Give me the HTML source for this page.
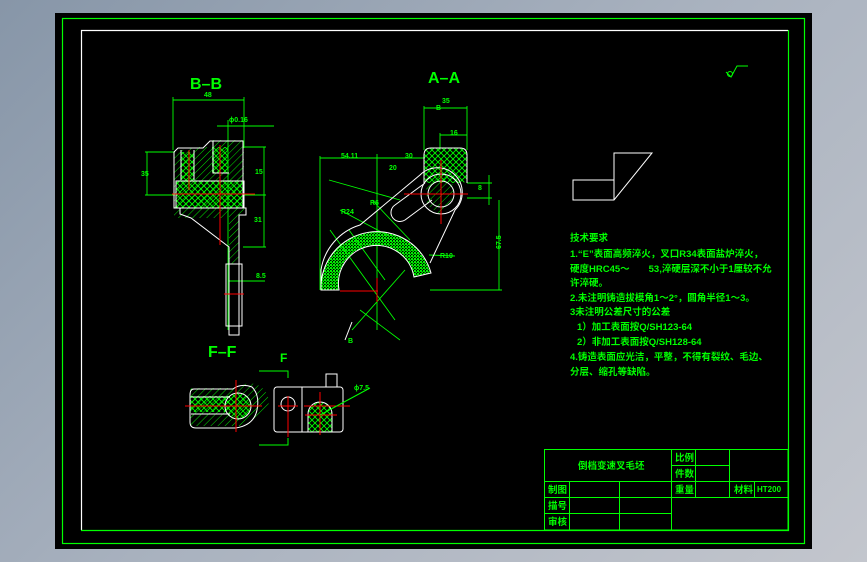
<!DOCTYPE html>
<html><head><meta charset="utf-8"><style>
html,body{margin:0;padding:0}
body{width:867px;height:562px;overflow:hidden;background:linear-gradient(135deg,#8796a8 0%,#a9b2bf 50%,#c3c6cd 100%);position:relative;font-family:"Liberation Sans","Noto Sans CJK SC",sans-serif}
svg{position:absolute;left:0;top:0}
</style></head><body>
<svg width="867" height="562" viewBox="0 0 867 562" xmlns="http://www.w3.org/2000/svg">
<defs>
<pattern id="xh" width="6" height="6" patternUnits="userSpaceOnUse">
<path d="M0 0L6 6M6 0L0 6" stroke="#00ff00" stroke-width="0.9"/>
</pattern>
<pattern id="dh" width="5" height="5" patternUnits="userSpaceOnUse" patternTransform="rotate(45)">
<path d="M0 0V5" stroke="#00ff00" stroke-width="0.9"/>
</pattern>
<pattern id="ch" width="3" height="3" patternUnits="userSpaceOnUse">
<rect width="2" height="2" fill="#00ee00"/><rect x="1.5" y="1.5" width="1.5" height="1.5" fill="#00ee00"/>
</pattern>
</defs>
<rect x="55" y="13" width="757" height="536" fill="#000"/>
<rect x="62.5" y="18.5" width="742" height="525" fill="none" stroke="#00ff00" stroke-width="1.2"/>
<path d="M81.5 530V30.5H788" fill="none" stroke="#fff" stroke-width="1.2"/>
<path d="M788.5 30V530.5H81" fill="none" stroke="#00ff00" stroke-width="1.2"/>

<g fill="#00ff00" font-size="16" font-weight="bold">
<text x="190" y="89">B–B</text>
<text x="428" y="83">A–A</text>
<text x="208" y="357">F–F</text>
<text x="280" y="362" font-size="12">F</text>
</g>

<!-- B-B view -->
<g stroke="#00ff00" stroke-width="0.9" fill="none">
<path d="M173 100H244M173 97V150M244 97V148"/>
<path d="M217 126H274M228 120V330"/>
<path d="M147 152V195M145 152H175M145 195H175M243 147H266M243 247H266M264 147V247M243 195H266"/>
<path d="M228 281H265"/>
</g>
<g fill="#00ff00" font-size="7" font-weight="bold"><text x="204" y="97">48</text><text x="229" y="122">ϕ0.16</text><text x="141" y="176">35</text><text x="255" y="174">15</text><text x="254" y="222">31</text><text x="256" y="278">8.5</text></g>
<path d="M174 152L195 147H210L213 140H244V215H239V264H229V215L222 218H174Z" fill="url(#dh)"/>
<rect x="176" y="181" width="68" height="27" fill="url(#xh)"/>
<rect x="181" y="152" width="13" height="30" fill="url(#xh)"/>
<rect x="212" y="147" width="16" height="26" fill="url(#xh)"/>
<g stroke="#fff" stroke-width="1" fill="none">
<path d="M174 152L178 148H203L207 144L210 141H243V208H246V215H239V264H229V247L191 218L180 214V208H174Z"/>
<path d="M176 181H244V208H176Z M181 150V180M194 150V180M213 141V173H229"/>
<rect x="226" y="264" width="16" height="62"/><rect x="229" y="264" width="10" height="71"/>
</g>
<g stroke="#ff0000" stroke-width="1"><path d="M189 150V190M220 145V245M172 194H255M224 294H244"/></g>

<!-- A-A view -->
<g stroke="#00ff00" stroke-width="0.9" fill="none">
<path d="M424 108H467M424 106V150M467 106V150M440 135H467M440 133V150"/>
<path d="M320 158H425M320 156V290M377 154V330"/>
<path d="M467 183H492M467 198H492M489 175V205M499 200V290M430 290H502"/>
<path d="M329 180L400 200M340 210L387 235M372 200L410 240M349 230L385 280M429 255L455 256"/>
<path d="M352 330L405 270M360 310L400 340M330 230L395 320"/>
</g>
<path d="M321 290A56 56 0 0 1 431 273L414 277A38 38 0 0 0 339 290Z" fill="url(#ch)"/>
<rect x="424" y="148" width="43" height="35" rx="5" fill="url(#xh)"/>
<path d="M426 183L437 175L451 178L455 195L440 215L427 205Z" fill="url(#dh)"/>
<g stroke="#fff" stroke-width="1" fill="none">
<path d="M321 290A56 56 0 0 1 431 273L414 277A38 38 0 0 0 339 290Z"/>
<path d="M321 290V270A56 56 0 0 1 360 225L420 175A20 20 0 1 1 455 210L430 263"/>
<path d="M424 183V155Q424 148 431 148H460Q467 148 467 155V183"/>
<circle cx="441" cy="194" r="20"/><circle cx="441" cy="194" r="13"/>
<path d="M395 205L425 183M405 220L432 200M395 205A7 7 0 0 0 405 220"/>
<path d="M352 322L345 340"/>
</g>
<g stroke="#ff0000" stroke-width="1"><path d="M404 194H468M441 160V224M340 291H378M377 278V302"/></g>
<g fill="#00ff00" font-size="7" font-weight="bold"><text x="341" y="158">54.11</text><text x="405" y="158">30</text><text x="442" y="103">35</text><text x="450" y="135">16</text><text x="389" y="170">20</text><text x="478" y="190">8</text><text x="341" y="214">R24</text><text x="370" y="205">R6</text><text x="440" y="258">R10</text><text x="492" y="250" transform="rotate(-90 496 245)">67.5</text><text x="348" y="343">B</text><text x="436" y="110">B</text></g>

<!-- F-F view -->
<path d="M190 388H236L245 384A16 16 0 0 1 255 420L245 426H190Z" fill="url(#dh)"/>
<rect x="190" y="396" width="40" height="16" fill="url(#xh)"/>
<circle cx="238" cy="406" r="13" fill="url(#xh)"/>
<path d="M308 414A12 12 0 0 1 332 414V432H308Z" fill="url(#xh)"/>
<g stroke="#fff" stroke-width="1" fill="none">
<path d="M194 389H233Q241 383 252 387Q260 395 257 410Q254 425 236 428H196Q190 428 190 422V395Q190 389 194 389Z"/>
<path d="M191 397H230M191 414H230"/><circle cx="238" cy="406" r="13"/>
<rect x="274" y="387" width="69" height="45" rx="3"/><path d="M302 387V432M326 387V374H337V387"/>
<circle cx="288" cy="404" r="7"/><path d="M308 432V414A12 12 0 0 1 332 414V432"/>
</g>
<g stroke="#ff0000" stroke-width="1"><path d="M185 406H262M236 380V432M278 406H298M288 396V437M304 406H350M320 392V435M305 415H337"/></g>
<g stroke="#00ff00" stroke-width="1" fill="none"><path d="M259 371H288V378M259 445H288V438M320 415L370 388"/></g>
<text x="354" y="390" fill="#00ff00" font-size="7" font-weight="bold">ϕ7.5</text>

<!-- right sketches -->
<path d="M573 180H614V153H652L614 200H573Z" fill="none" stroke="#fff" stroke-width="1"/>
<path d="M614 180V200" stroke="#fff"/>
<path d="M726 72L731 77L737 66H748" fill="none" stroke="#00ff00" stroke-width="1"/>
<circle cx="730" cy="74" r="2.5" fill="none" stroke="#00ff00"/>

<!-- notes -->
<g fill="#00ff00" font-size="9.5" font-weight="bold" font-family="'Liberation Sans','Noto Sans CJK SC',sans-serif">
<text x="570" y="241">技术要求</text>
<text x="570" y="257">1.“E”表面高频淬火，叉口R34表面盐炉淬火，</text>
<text x="570" y="272">硬度HRC45～　　53,淬硬层深不小于1厘较不允</text>
<text x="570" y="286">许淬硬。</text>
<text x="570" y="301">2.未注明铸造拔模角1～2°，圆角半径1～3。</text>
<text x="570" y="315">3未注明公差尺寸的公差</text>
<text x="577" y="330">1）加工表面按Q/SH123-64</text>
<text x="577" y="345">2）非加工表面按Q/SH128-64</text>
<text x="570" y="360">4.铸造表面应光洁，平整，不得有裂纹、毛边、</text>
<text x="570" y="375">分层、缩孔等缺陷。</text>
</g>

<!-- title block -->
<g stroke="#00ff00" stroke-width="1" fill="none">
<rect x="544.5" y="449.5" width="243.5" height="80.5"/>
<path d="M544 481.5H788M544 497.5H671M544 513.5H671M671.5 449V530M695.5 449V498M729.5 449V498M754.5 481V498M569.5 481V530M619.5 481V530M671 465.5H729M671 497.5H788"/>
</g>
<g fill="#00ff00" font-size="9.5" font-weight="bold" font-family="'Liberation Sans','Noto Sans CJK SC',sans-serif">
<text x="578" y="469">倒档变速叉毛坯</text>
<text x="675" y="461">比例</text><text x="675" y="477">件数</text>
<text x="675" y="493">重量</text><text x="734" y="493">材料</text>
<text x="757" y="492" font-size="8">HT200</text>
<text x="548" y="493">制图</text><text x="548" y="509">描号</text><text x="548" y="525">审核</text>
</g>
</svg>
</body></html>
